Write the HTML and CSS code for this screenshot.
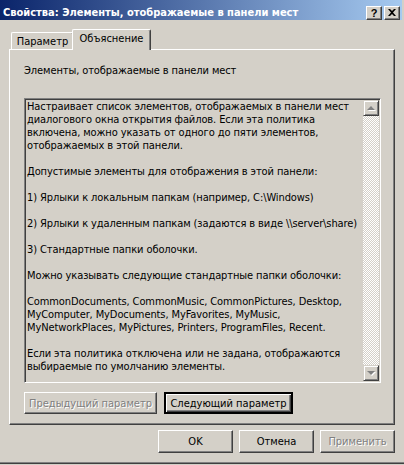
FILE: index.html
```html
<!DOCTYPE html>
<html lang="ru">
<head>
    <meta charset="UTF-8">
    <title>Свойства: Элементы, отображаемые в панели мест</title>
    <link rel="stylesheet" href="styles.css">
</head>
<body>
    <div class="window">
        <div class="titlebar">
            <span class="title">Свойства: Элементы, отображаемые в панели мест</span>
            <div class="caption-buttons">
                <span class="cap-btn help">?</span>
                <span class="cap-btn">
                    <svg width="8" height="7" viewBox="0 0 8 7">
                        <path d="M0 0h2l2 2 2-2h2L5 3.5 8 7H6L4 5 2 7H0l3-3.5z" fill="#000"/>
                    </svg>
                </span>
            </div>
        </div>

        <div class="client">
            <div class="tabs">
                <div class="tab">Параметр</div>
                <div class="tab active">Объяснение</div>
            </div>

            <div class="panel">
                <div class="label">Элементы, отображаемые в панели мест</div>

                <div class="textbox">
                    <div class="text">
                        <p>Настраивает список элементов, отображаемых в панели мест<br>
                        диалогового окна открытия файлов. Если эта политика<br>
                        включена, можно указать от одного до пяти элементов,<br>
                        отображаемых в этой панели.</p>
                        <p>Допустимые элементы для отображения в этой панели:</p>
                        <p>1) Ярлыки к локальным папкам (например, C:\Windows)</p>
                        <p>2) Ярлыки к удаленным папкам (задаются в виде \\server\share)</p>
                        <p>3) Стандартные папки оболочки.</p>
                        <p>Можно указывать следующие стандартные папки оболочки:</p>
                        <p>CommonDocuments, CommonMusic, CommonPictures, Desktop,<br>
                        MyComputer, MyDocuments, MyFavorites, MyMusic,<br>
                        MyNetworkPlaces, MyPictures, Printers, ProgramFiles, Recent.</p>
                        <p>Если эта политика отключена или не задана, отображаются<br>
                        выбираемые по умолчанию элементы.</p>
                    </div>
                    <div class="scrollbar">
                        <div class="scroll-btn"><span class="arrow up"></span></div>
                        <div class="track"></div>
                        <div class="scroll-btn"><span class="arrow down"></span></div>
                    </div>
                </div>

                <div class="nav-buttons">
                    <button class="btn prev" disabled>Предыдущий параметр</button>
                    <button class="btn next default">Следующий параметр</button>
                </div>
            </div>

            <div class="dialog-buttons">
                <button class="btn">OK</button>
                <button class="btn">Отмена</button>
                <button class="btn" disabled>Применить</button>
            </div>
        </div>
    </div>
</body>
</html>
```

FILE: styles.css
```css
body {
    margin: 0;
    width: 404px;
    height: 465px;
    overflow: hidden;
    background-color: #d4d0c8;
    font-family: "DejaVu Sans Condensed", "Liberation Sans", Arial, sans-serif;
    font-size: 11px;
    color: #000;
}

.window {
    box-sizing: border-box;
    height: 463px;
    border-bottom: 1px solid #808080;
    box-shadow: 0 1px 0 #404040;
}

/* title bar */

.titlebar {
    width: 402px;
    height: 20px;
    display: flex;
    align-items: center;
    justify-content: space-between;
    background: linear-gradient(to right, #0a246a, #a6caf0);
}

.title {
    padding-left: 3px;
    padding-top: 4px;
    color: #fff;
    font-weight: bold;
    font-size: 11px;
}

.caption-buttons {
    display: flex;
    gap: 2px;
    padding: 5px 2px 0 0;
}

.cap-btn {
    box-sizing: border-box;
    width: 16px;
    height: 14px;
    display: flex;
    align-items: center;
    justify-content: center;
    background: #d4d0c8;
    border: 1px solid;
    border-color: #fff #404040 #404040 #fff;
    box-shadow: inset -1px -1px #808080;
}

.cap-btn.help {
    font-family: "Liberation Sans", Arial, sans-serif;
    font-weight: bold;
    font-size: 11px;
    line-height: 12px;
}

/* tabs */

.client {
    padding: 9px 9px 0 9px;
}

.tabs {
    display: flex;
    align-items: flex-end;
    height: 20px;
    padding-left: 2px;
}

.tab {
    box-sizing: border-box;
    height: 17px;
    width: 63px;
    display: flex;
    justify-content: center;
    align-items: center;
    border: 1px solid;
    border-bottom: none;
    border-color: #fff #404040 #fff #fff;
    border-radius: 2px 2px 0 0;
    box-shadow: inset -1px 0 #808080;
    background: #d4d0c8;
    padding-top: 1px;
}

.tab.active {
    position: relative;
    z-index: 1;
    width: 79px;
    height: 21px;
    margin-left: -2px;
    margin-bottom: -1px;
    padding-top: 0;
    padding-bottom: 3px;
}

.panel {
    box-sizing: border-box;
    width: 386px;
    height: 376px;
    padding: 14px 0 0 14px;
    border: 1px solid;
    border-color: #fff #404040 #404040 #fff;
    box-shadow: inset -1px -1px #808080;
}

.label {
    line-height: 13px;
    letter-spacing: -0.1px;
}

/* text box */

.textbox {
    box-sizing: border-box;
    width: 357px;
    height: 285px;
    margin-top: 21px;
    display: flex;
    border: 1px solid;
    border-color: #808080 #fff #fff #808080;
    box-shadow: inset 1px 1px #404040, inset -1px -1px #d4d0c8;
    padding: 1px;
}

.text {
    flex: 1;
    padding: 0 1px;
    line-height: 13px;
    letter-spacing: -0.1px;
    white-space: nowrap;
    overflow: hidden;
}

.text p {
    margin: 0 0 13px 0;
}

.scrollbar {
    width: 16px;
    display: flex;
    flex-direction: column;
}

.scroll-btn {
    box-sizing: border-box;
    width: 16px;
    height: 16px;
    display: flex;
    align-items: center;
    justify-content: center;
    background: #d4d0c8;
    border: 1px solid;
    border-color: #d4d0c8 #404040 #404040 #d4d0c8;
    box-shadow: inset 1px 1px #fff, inset -1px -1px #808080;
}

.track {
    flex: 1;
    background: repeating-conic-gradient(#fff 0 25%, #d4d0c8 0 50%) 0 0 / 2px 2px;
}

.arrow {
    width: 0;
    height: 0;
    border-left: 4px solid transparent;
    border-right: 4px solid transparent;
    filter: drop-shadow(1px 1px 0 #fff);
}

.arrow.up {
    border-bottom: 4px solid #808080;
}

.arrow.down {
    border-top: 4px solid #808080;
}

/* buttons */

.btn {
    box-sizing: border-box;
    height: 23px;
    width: 75px;
    padding: 0;
    font-family: inherit;
    font-size: 11px;
    font-weight: normal;
    color: #000;
    background: #d4d0c8;
    border: 1px solid;
    border-color: #fff #404040 #404040 #fff;
    box-shadow: inset -1px -1px #808080;
}

.btn:disabled {
    color: #808080;
    text-shadow: 1px 1px 0 #fff;
}

.nav-buttons {
    display: flex;
    gap: 7px;
    margin-top: 9px;
}

.nav-buttons .btn {
    height: 22px;
}

.btn.prev {
    width: 133px;
}

.btn.next {
    width: 129px;
}

.btn.default {
    border: 2px solid;
    border-color: #000;
    box-shadow: inset 1px 1px #fff, inset -1px -1px #404040, inset -2px -2px #808080;
}

.dialog-buttons {
    display: flex;
    justify-content: flex-end;
    gap: 6px;
    width: 386px;
    margin-top: 5px;
}
```
